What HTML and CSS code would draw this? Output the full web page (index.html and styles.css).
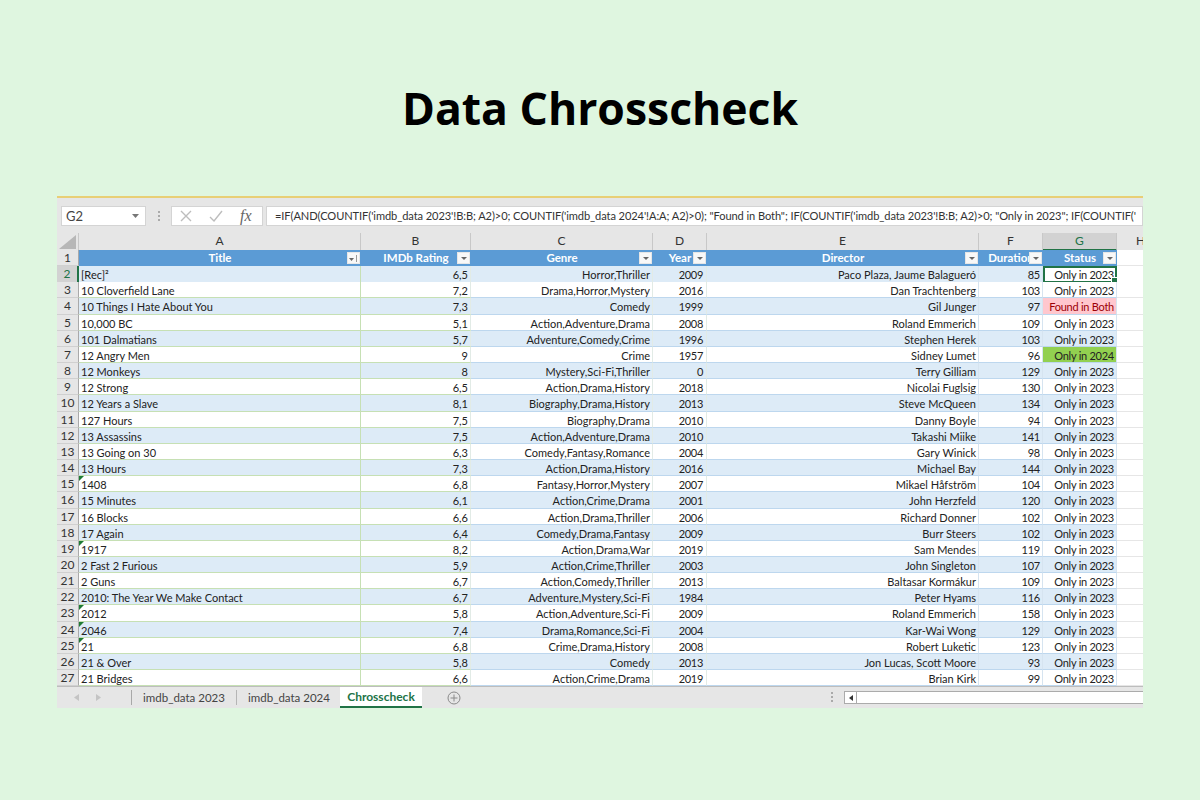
FILE: index.html
```html
<!DOCTYPE html>
<html lang="en">
<head>
<meta charset="utf-8">
<title>Data Chrosscheck</title>
<link rel="stylesheet" href="styles.css">
</head>
<body>
<h1 class="title">Data Chrosscheck</h1>
<main class="sheet">
  <div class="formula-bar">
    <div class="name-box"><span>G2</span><svg class="name-caret" width="7" height="4" viewBox="0 0 7 4"><path d="M0 0h7L3.5 4z" fill="#777"/></svg></div>
    <div class="grip"></div>
    <div class="fx-buttons">
      <svg width="12" height="12" viewBox="0 0 12 12"><path d="M1 1l10 10M11 1L1 11" stroke="#bdbdbd" stroke-width="1.4" fill="none"/></svg>
      <svg width="14" height="12" viewBox="0 0 14 12"><path d="M1 7l4 4 8-10" stroke="#bdbdbd" stroke-width="1.4" fill="none"/></svg>
      <span class="fx">fx</span>
    </div>
    <div class="formula">=IF(AND(COUNTIF('imdb_data 2023'!B:B; A2)&gt;0; COUNTIF('imdb_data 2024'!A:A; A2)&gt;0); "Found in Both"; IF(COUNTIF('imdb_data 2023'!B:B; A2)&gt;0; "Only in 2023"; IF(COUNTIF('</div>
  </div>

  <div class="row letters">
    <div class="corner"><svg width="18" height="14" viewBox="0 0 18 14"><path d="M17 0v14H0z" fill="#b7b7b7"/></svg></div>
    <div>A</div><div>B</div><div>C</div><div>D</div><div>E</div><div>F</div><div class="sel-col">G</div><div>H</div>
  </div>

  <div class="row head">
    <div class="num">1</div>
    <div class="th">Title<span class="filter sorted"><svg width="11" height="9" viewBox="0 0 11 9"><path d="M1 4h5L3.5 7z" fill="#666"/><path d="M8.5 1v7" stroke="#999" stroke-width="1"/></svg></span></div>
    <div class="th">IMDb Rating<span class="filter"><i></i></span></div>
    <div class="th">Genre<span class="filter"><i></i></span></div>
    <div class="th">Year<span class="filter"><i></i></span></div>
    <div class="th">Director<span class="filter"><i></i></span></div>
    <div class="th">Duration<span class="filter"><i></i></span></div>
    <div class="th">Status<span class="filter"><i></i></span></div>
    <div class="blank"></div>
  </div>

  <div class="row alt"><div class="num sel-num">2</div><div class="c t">[Rec]²</div><div class="c">6,5</div><div class="c g">Horror,Thriller</div><div class="c y">2009</div><div class="c b">Paco Plaza, Jaume Balagueró</div><div class="c b n">85</div><div class="c b n active">Only in 2023</div><div class="blank"></div></div>
  <div class="row"><div class="num">3</div><div class="c t">10 Cloverfield Lane</div><div class="c">7,2</div><div class="c g">Drama,Horror,Mystery</div><div class="c y">2016</div><div class="c b">Dan Trachtenberg</div><div class="c b n">103</div><div class="c b n">Only in 2023</div><div class="blank"></div></div>
  <div class="row alt"><div class="num">4</div><div class="c t">10 Things I Hate About You</div><div class="c">7,3</div><div class="c g">Comedy</div><div class="c y">1999</div><div class="c b">Gil Junger</div><div class="c b n">97</div><div class="c b n both">Found in Both</div><div class="blank"></div></div>
  <div class="row"><div class="num">5</div><div class="c t">10,000 BC</div><div class="c">5,1</div><div class="c g">Action,Adventure,Drama</div><div class="c y">2008</div><div class="c b">Roland Emmerich</div><div class="c b n">109</div><div class="c b n">Only in 2023</div><div class="blank"></div></div>
  <div class="row alt"><div class="num">6</div><div class="c t">101 Dalmatians</div><div class="c">5,7</div><div class="c g">Adventure,Comedy,Crime</div><div class="c y">1996</div><div class="c b">Stephen Herek</div><div class="c b n">103</div><div class="c b n">Only in 2023</div><div class="blank"></div></div>
  <div class="row"><div class="num">7</div><div class="c t">12 Angry Men</div><div class="c">9</div><div class="c g">Crime</div><div class="c y">1957</div><div class="c b">Sidney Lumet</div><div class="c b n">96</div><div class="c b n y24">Only in 2024</div><div class="blank"></div></div>
  <div class="row alt"><div class="num">8</div><div class="c t">12 Monkeys</div><div class="c">8</div><div class="c g">Mystery,Sci-Fi,Thriller</div><div class="c y">0</div><div class="c b">Terry Gilliam</div><div class="c b n">129</div><div class="c b n">Only in 2023</div><div class="blank"></div></div>
  <div class="row"><div class="num">9</div><div class="c t">12 Strong</div><div class="c">6,5</div><div class="c g">Action,Drama,History</div><div class="c y">2018</div><div class="c b">Nicolai Fuglsig</div><div class="c b n">130</div><div class="c b n">Only in 2023</div><div class="blank"></div></div>
  <div class="row alt"><div class="num">10</div><div class="c t">12 Years a Slave</div><div class="c">8,1</div><div class="c g">Biography,Drama,History</div><div class="c y">2013</div><div class="c b">Steve McQueen</div><div class="c b n">134</div><div class="c b n">Only in 2023</div><div class="blank"></div></div>
  <div class="row"><div class="num">11</div><div class="c t">127 Hours</div><div class="c">7,5</div><div class="c g">Biography,Drama</div><div class="c y">2010</div><div class="c b">Danny Boyle</div><div class="c b n">94</div><div class="c b n">Only in 2023</div><div class="blank"></div></div>
  <div class="row alt"><div class="num">12</div><div class="c t">13 Assassins</div><div class="c">7,5</div><div class="c g">Action,Adventure,Drama</div><div class="c y">2010</div><div class="c b">Takashi Miike</div><div class="c b n">141</div><div class="c b n">Only in 2023</div><div class="blank"></div></div>
  <div class="row"><div class="num">13</div><div class="c t">13 Going on 30</div><div class="c">6,3</div><div class="c g">Comedy,Fantasy,Romance</div><div class="c y">2004</div><div class="c b">Gary Winick</div><div class="c b n">98</div><div class="c b n">Only in 2023</div><div class="blank"></div></div>
  <div class="row alt"><div class="num">14</div><div class="c t">13 Hours</div><div class="c">7,3</div><div class="c g">Action,Drama,History</div><div class="c y">2016</div><div class="c b">Michael Bay</div><div class="c b n">144</div><div class="c b n">Only in 2023</div><div class="blank"></div></div>
  <div class="row"><div class="num">15</div><div class="c t tri">1408</div><div class="c">6,8</div><div class="c g">Fantasy,Horror,Mystery</div><div class="c y">2007</div><div class="c b">Mikael Håfström</div><div class="c b n">104</div><div class="c b n">Only in 2023</div><div class="blank"></div></div>
  <div class="row alt"><div class="num">16</div><div class="c t">15 Minutes</div><div class="c">6,1</div><div class="c g">Action,Crime,Drama</div><div class="c y">2001</div><div class="c b">John Herzfeld</div><div class="c b n">120</div><div class="c b n">Only in 2023</div><div class="blank"></div></div>
  <div class="row"><div class="num">17</div><div class="c t">16 Blocks</div><div class="c">6,6</div><div class="c g">Action,Drama,Thriller</div><div class="c y">2006</div><div class="c b">Richard Donner</div><div class="c b n">102</div><div class="c b n">Only in 2023</div><div class="blank"></div></div>
  <div class="row alt"><div class="num">18</div><div class="c t">17 Again</div><div class="c">6,4</div><div class="c g">Comedy,Drama,Fantasy</div><div class="c y">2009</div><div class="c b">Burr Steers</div><div class="c b n">102</div><div class="c b n">Only in 2023</div><div class="blank"></div></div>
  <div class="row"><div class="num">19</div><div class="c t tri">1917</div><div class="c">8,2</div><div class="c g">Action,Drama,War</div><div class="c y">2019</div><div class="c b">Sam Mendes</div><div class="c b n">119</div><div class="c b n">Only in 2023</div><div class="blank"></div></div>
  <div class="row alt"><div class="num">20</div><div class="c t">2 Fast 2 Furious</div><div class="c">5,9</div><div class="c g">Action,Crime,Thriller</div><div class="c y">2003</div><div class="c b">John Singleton</div><div class="c b n">107</div><div class="c b n">Only in 2023</div><div class="blank"></div></div>
  <div class="row"><div class="num">21</div><div class="c t">2 Guns</div><div class="c">6,7</div><div class="c g">Action,Comedy,Thriller</div><div class="c y">2013</div><div class="c b">Baltasar Kormákur</div><div class="c b n">109</div><div class="c b n">Only in 2023</div><div class="blank"></div></div>
  <div class="row alt"><div class="num">22</div><div class="c t">2010: The Year We Make Contact</div><div class="c">6,7</div><div class="c g">Adventure,Mystery,Sci-Fi</div><div class="c y">1984</div><div class="c b">Peter Hyams</div><div class="c b n">116</div><div class="c b n">Only in 2023</div><div class="blank"></div></div>
  <div class="row"><div class="num">23</div><div class="c t tri">2012</div><div class="c">5,8</div><div class="c g">Action,Adventure,Sci-Fi</div><div class="c y">2009</div><div class="c b">Roland Emmerich</div><div class="c b n">158</div><div class="c b n">Only in 2023</div><div class="blank"></div></div>
  <div class="row alt"><div class="num">24</div><div class="c t tri">2046</div><div class="c">7,4</div><div class="c g">Drama,Romance,Sci-Fi</div><div class="c y">2004</div><div class="c b">Kar-Wai Wong</div><div class="c b n">129</div><div class="c b n">Only in 2023</div><div class="blank"></div></div>
  <div class="row"><div class="num">25</div><div class="c t tri">21</div><div class="c">6,8</div><div class="c g">Crime,Drama,History</div><div class="c y">2008</div><div class="c b">Robert Luketic</div><div class="c b n">123</div><div class="c b n">Only in 2023</div><div class="blank"></div></div>
  <div class="row alt"><div class="num">26</div><div class="c t">21 &amp; Over</div><div class="c">5,8</div><div class="c g">Comedy</div><div class="c y">2013</div><div class="c b">Jon Lucas, Scott Moore</div><div class="c b n">93</div><div class="c b n">Only in 2023</div><div class="blank"></div></div>
  <div class="row"><div class="num">27</div><div class="c t">21 Bridges</div><div class="c">6,6</div><div class="c g">Action,Crime,Drama</div><div class="c y">2019</div><div class="c b">Brian Kirk</div><div class="c b n">99</div><div class="c b n">Only in 2023</div><div class="blank"></div></div>

  <div class="tabbar">
    <div class="tab-nav">
      <svg width="5" height="7" viewBox="0 0 5 7"><path d="M5 0v7L0 3.5z" fill="#c4c4c4"/></svg>
      <svg width="5" height="7" viewBox="0 0 5 7"><path d="M0 0v7l5-3.5z" fill="#c4c4c4"/></svg>
    </div>
    <div class="tab">imdb_data 2023</div>
    <div class="tab">imdb_data 2024</div>
    <div class="tab current">Chrosscheck</div>
    <svg class="add" width="14" height="14" viewBox="0 0 14 14"><circle cx="7" cy="7" r="6" fill="none" stroke="#8a8a8a"/><path d="M3.5 7h7M7 3.5v7" stroke="#8a8a8a"/></svg>
    <div class="h-grip"></div>
    <div class="hscroll"><div class="hscroll-btn"><svg width="4" height="6" viewBox="0 0 4 6"><path d="M4 0v6L0 3z" fill="#333"/></svg></div></div>
  </div>
</main>
</body>
</html>
```
FILE: styles.css
```css
* { box-sizing: border-box; }
html, body { margin: 0; padding: 0; }
body {
  height: 800px;
  overflow: hidden;
  background: #dff6e0;
  font-family: "Lato", "Liberation Sans", sans-serif;
  color: #222;
}
.title {
  margin: 0;
  height: 196px;
  padding-top: 76px;
  font: 700 44.5px/64px "Open Sans", "Noto Sans", sans-serif;
  color: #000;
  text-align: center;
}
.sheet {
  width: 1086px;
  margin: 0 auto;
  background: #e6e6e6;
  border-top: 2px solid #e8cf76;
  overflow: hidden;
}
.formula-bar {
  height: 35px;
  display: flex;
  align-items: flex-start;
  padding: 8px 0 0 4px;
}
.name-box {
  width: 85px;
  height: 20px;
  background: #fff;
  border: 1px solid #d4d4d4;
  display: flex;
  align-items: center;
  justify-content: space-between;
  padding: 0 6px 0 4px;
  font-size: 13px;
  color: #444;
}
.grip {
  width: 2px;
  height: 10px;
  margin: 5px 11px 0 12px;
  border-left: 2px dotted #aaa;
}
.fx-buttons {
  width: 92px;
  height: 20px;
  background: #fff;
  border: 1px solid #d4d4d4;
  display: flex;
  align-items: center;
  gap: 17px;
  padding: 0 7px 0 8px;
}
.fx {
  font: italic 400 16px/1 "Liberation Serif", serif;
  color: #666;
}
.formula {
  flex: 1;
  min-width: 0;
  height: 20px;
  margin-left: 3px;
  background: #fff;
  border: 1px solid #d4d4d4;
  padding: 0 0 0 8px;
  font-size: 11.1px;
  letter-spacing: -0.09px;
  line-height: 18px;
  color: #333;
  white-space: nowrap;
  overflow: hidden;
}
.row {
  display: grid;
  grid-template-columns: 22px 282px 110px 182px 54px 272px 64px 74px 48px;
  height: 16.16px;
  width: 1108px;
  font-size: 11px;
  line-height: 15px;
}
.letters { height: 17px; line-height: 16px; font-size: 12px; color: #333; text-align: center; }
.letters > div { border-right: 1px solid #c8c8c8; border-bottom: 1px solid #a9a9a9; }
.corner { display: flex; align-items: flex-end; justify-content: flex-end; padding: 0 1px 1px 0; }
.sel-col { background: #d2d2d2; color: #217346; border-bottom: 2px solid #217346 !important; }
.num {
  background: #e6e6e6;
  text-align: center;
  font-size: 12px;
  color: #333;
  border-bottom: 1px solid #d0d0d0;
  border-right: 1px solid #a9a9a9;
}
.sel-num { background: #d2d2d2; color: #217346; border-right: 2px solid #217346; }
.head .th {
  position: relative;
  background: #5b9bd5;
  color: #fff;
  font-size: 11.5px;
  font-weight: 700;
  text-align: center;
  overflow: hidden;
}
.filter {
  position: absolute;
  right: 1px;
  top: 2px;
  width: 13px;
  height: 12px;
  background: #f8f8f8;
  border: 1px solid #e6e6e6;
  display: flex;
  align-items: center;
  justify-content: center;
}
.filter i {
  width: 0;
  height: 0;
  border: 3px solid transparent;
  border-top: 3px solid #666;
  border-bottom: 0;
}
.c {
  position: relative;
  padding: 1px 2px 0 0;
  text-align: right;
  white-space: nowrap;
  overflow: hidden;
  background: #fff;
  border-bottom: 1px solid #c6e0b4;
  border-right: 1px solid #e2ebe6;
}
.c.t { text-align: left; padding-left: 2px; padding-right: 0; border-right-color: #c6e0b4; }
.c.y { padding-right: 3px; letter-spacing: -0.3px; border-bottom-color: #bdd7ee; }
.c.g { border-bottom-color: #bdd7ee; }
.c.n { letter-spacing: -0.25px; }
.c.b { border-bottom-color: #bdd7ee; border-right-color: #d6e4f0; }
.alt .c { background: #ddebf7; }
.c.tri::before {
  content: "";
  position: absolute;
  left: 0;
  top: 0;
  border-top: 5px solid #1e7b34;
  border-right: 5px solid transparent;
}
.alt .c.both, .c.both { background: #ffc7ce; color: #9c0006; }
.c.y24 { background: #92d050; }
.c.active {
  overflow: visible;
  background: #fff;
  outline: 2px solid #217346;
  outline-offset: -2px;
}
.alt .c.active { background: #fff; }
.c.active::after {
  content: "";
  position: absolute;
  right: -2px;
  bottom: -2px;
  width: 5px;
  height: 5px;
  background: #217346;
  border: 1px solid #fff;
}
.blank { background: #fff; border-bottom: 1px solid #e6e6e6; }
.tabbar {
  height: 22px;
  display: flex;
  align-items: flex-start;
  border-top: 1px solid #bdbdbd;
  font-size: 11.5px;
  color: #444;
}
.tab-nav {
  width: 75px;
  height: 15px;
  margin-top: 3px;
  padding-left: 17px;
  display: flex;
  align-items: center;
  gap: 17px;
  border-right: 1px solid #a8a8a8;
}
.tab {
  width: 105px;
  height: 15px;
  margin-top: 3px;
  line-height: 15px;
  text-align: center;
  border-right: 1px solid #b5b5b5;
}
.tab.current {
  width: 82px;
  height: 21px;
  margin: 0 0 0 -2px;
  line-height: 20px;
  background: #fff;
  border: 0;
  border-bottom: 2px solid #217346;
  color: #217346;
  font-size: 12px;
  font-weight: 700;
}
.add { margin: 4px 0 0 25px; }
.h-grip {
  width: 2px;
  height: 10px;
  margin: 5px 0 0 370px;
  border-left: 2px dotted #aaa;
}
.hscroll {
  flex: 1;
  height: 13px;
  margin: 4px 0 0 11px;
  background: #fff;
  border: 1px solid #ababab;
  border-right: 0;
}
.hscroll-btn {
  width: 12px;
  height: 11px;
  display: flex;
  align-items: center;
  justify-content: center;
  border-right: 1px solid #ababab;
}
```
